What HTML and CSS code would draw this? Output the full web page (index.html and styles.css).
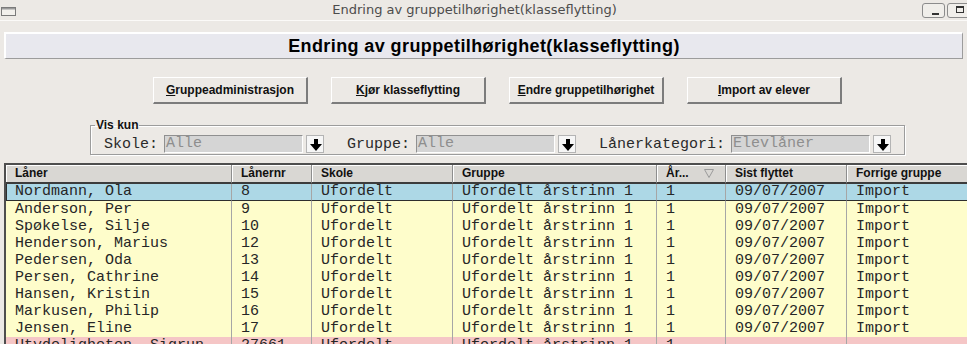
FILE: index.html
```html
<!DOCTYPE html>
<html>

<head>
    <meta charset="utf-8">
    <title>Endring av gruppetilhørighet(klasseflytting)</title>
    <link rel="stylesheet" href="styles.css">
</head>

<body>

    <div class="titlebar">
        <div class="winIcon">
            <svg width="15" height="9" viewBox="0 0 15 9">
                <rect x="0.5" y="0.5" width="14" height="8" fill="#f2f0ec" stroke="#7a7a7a" />
                <rect x="1" y="1" width="13" height="1.5" fill="#9a9a9a" />
            </svg>
        </div>
        <div class="winTitle">Endring av gruppetilhørighet(klasseflytting)</div>
        <div class="winButtons">
            <div class="winBtn">
                <svg width="21" height="13" viewBox="0 0 21 13">
                    <rect x="9" y="9" width="7" height="2" fill="#333" />
                </svg>
            </div>
            <div class="winBtn">
                <svg width="21" height="13" viewBox="0 0 21 13">
                    <rect x="8.5" y="2.5" width="7" height="6" fill="none" stroke="#333" />
                    <rect x="8.5" y="2.5" width="7" height="1.5" fill="#333" />
                </svg>
            </div>
        </div>
    </div>

    <div class="banner">Endring av gruppetilhørighet(klasseflytting)</div>

    <div class="toolbar">
        <button class="cmdBtn"><u>G</u>ruppeadministrasjon</button>
        <button class="cmdBtn"><u>K</u>jør klasseflytting</button>
        <button class="cmdBtn"><u>E</u>ndre gruppetilhørighet</button>
        <button class="cmdBtn"><u>I</u>mport av elever</button>
    </div>

    <fieldset class="filter">
        <legend>Vis kun</legend>
        <div class="filterRow">
            <div class="filterItem">
                <span class="filterLabel">Skole:</span>
                <span class="comboField">Alle</span>
                <span class="comboBtn">
                    <svg width="16" height="16" viewBox="0 0 16 16"><path d="M6 2H10V7H14L8 14L2 7H6Z" fill="#000" /></svg>
                </span>
            </div>
            <div class="filterItem">
                <span class="filterLabel">Gruppe:</span>
                <span class="comboField">Alle</span>
                <span class="comboBtn">
                    <svg width="16" height="16" viewBox="0 0 16 16"><path d="M6 2H10V7H14L8 14L2 7H6Z" fill="#000" /></svg>
                </span>
            </div>
            <div class="filterItem">
                <span class="filterLabel">Lånerkategori:</span>
                <span class="comboField">Elevlåner</span>
                <span class="comboBtn">
                    <svg width="16" height="16" viewBox="0 0 16 16"><path d="M6 2H10V7H14L8 14L2 7H6Z" fill="#000" /></svg>
                </span>
            </div>
        </div>
    </fieldset>

    <table class="grid">
        <colgroup>
            <col class="cLaaner">
            <col class="cNr">
            <col class="cSkole">
            <col class="cGruppe">
            <col class="cAar">
            <col class="cDato">
            <col class="cForrige">
        </colgroup>
        <thead>
            <tr>
                <th>Låner</th>
                <th>Lånernr</th>
                <th>Skole</th>
                <th>Gruppe</th>
                <th>År...<svg class="sortIcon" width="10" height="9" viewBox="0 0 10 9"><path d="M0.5 0.5H9.5L5 8.5Z" fill="none" stroke="#9a9a9a" /></svg></th>
                <th>Sist flyttet</th>
                <th>Forrige gruppe</th>
            </tr>
        </thead>
        <tbody>
            <tr class="selected">
                <td>Nordmann, Ola</td><td>8</td><td>Ufordelt</td><td>Ufordelt årstrinn 1</td><td>1</td><td>09/07/2007</td><td>Import</td>
            </tr>
            <tr>
                <td>Anderson, Per</td><td>9</td><td>Ufordelt</td><td>Ufordelt årstrinn 1</td><td>1</td><td>09/07/2007</td><td>Import</td>
            </tr>
            <tr>
                <td>Spøkelse, Silje</td><td>10</td><td>Ufordelt</td><td>Ufordelt årstrinn 1</td><td>1</td><td>09/07/2007</td><td>Import</td>
            </tr>
            <tr>
                <td>Henderson, Marius</td><td>12</td><td>Ufordelt</td><td>Ufordelt årstrinn 1</td><td>1</td><td>09/07/2007</td><td>Import</td>
            </tr>
            <tr>
                <td>Pedersen, Oda</td><td>13</td><td>Ufordelt</td><td>Ufordelt årstrinn 1</td><td>1</td><td>09/07/2007</td><td>Import</td>
            </tr>
            <tr>
                <td>Persen, Cathrine</td><td>14</td><td>Ufordelt</td><td>Ufordelt årstrinn 1</td><td>1</td><td>09/07/2007</td><td>Import</td>
            </tr>
            <tr>
                <td>Hansen, Kristin</td><td>15</td><td>Ufordelt</td><td>Ufordelt årstrinn 1</td><td>1</td><td>09/07/2007</td><td>Import</td>
            </tr>
            <tr>
                <td>Markusen, Philip</td><td>16</td><td>Ufordelt</td><td>Ufordelt årstrinn 1</td><td>1</td><td>09/07/2007</td><td>Import</td>
            </tr>
            <tr>
                <td>Jensen, Eline</td><td>17</td><td>Ufordelt</td><td>Ufordelt årstrinn 1</td><td>1</td><td>09/07/2007</td><td>Import</td>
            </tr>
            <tr class="flagged">
                <td>Utydeligheten, Sigrun</td><td>27661</td><td>Ufordelt</td><td>Ufordelt årstrinn 1</td><td>1</td><td></td><td></td>
            </tr>
        </tbody>
    </table>

</body>

</html>
```

FILE: styles.css
```css
body {
    margin: 0;
    padding: 0;
    width: 967px;
    height: 344px;
    overflow: hidden;
    background-color: #ece9e5;
    font-family: "Liberation Sans", Arial, sans-serif;
    color: #111;
}

/* vindustittel */
.titlebar {
    display: flex;
    align-items: flex-start;
    height: 20px;
    border-bottom: 1px solid #fbfaf8;
}

.winIcon {
    width: 16px;
    padding: 7px 0 0 1px;
    line-height: 0;
}

.winTitle {
    flex: 1;
    padding-left: 10px;
    text-align: center;
    font-family: "DejaVu Sans", sans-serif;
    font-size: 13px;
    line-height: 20px;
    color: #4c4c4c;
}

.winButtons {
    display: flex;
    gap: 2px;
    padding-top: 3px;
    margin-right: -3px;
}

.winBtn {
    width: 21px;
    height: 13px;
    border: 1px solid #8c8c8c;
    border-radius: 3px;
    background-color: #f0eeea;
    line-height: 0;
}

/* overskrift */
.banner {
    margin: 11px 4px 0 4px;
    height: 24px;
    border-style: solid;
    border-width: 2px 1px 1px 2px;
    border-color: #ffffff #9c9c9c #9c9c9c #ffffff;
    background-color: #e8e8ee;
    text-align: center;
    font-size: 18px;
    font-weight: bold;
    letter-spacing: 0.4px;
    line-height: 25px;
    color: #000;
}

/* knapper */
.toolbar {
    display: flex;
    gap: 23px;
    margin-top: 18px;
    padding-left: 153px;
}

.cmdBtn {
    width: 155px;
    height: 27px;
    padding: 0;
    background-color: #ece9e5;
    border-style: solid;
    border-width: 1px 2px 2px 1px;
    border-color: #ffffff #7c7c7c #7c7c7c #ffffff;
    font-family: "Liberation Sans", Arial, sans-serif;
    font-size: 12px;
    font-weight: bold;
    color: #111;
}

/* filter */
.filter {
    margin: 15px 0 0 90px;
    width: 815px;
    box-sizing: border-box;
    padding: 4px 0 1px 13px;
    border: 1px solid #9c9c9c;
    box-shadow: 1px 1px 0 #ffffff, inset 1px 1px 0 #ffffff;
    min-inline-size: 0;
}

.filter legend {
    margin-left: -9px;
    padding: 0 1px;
    font-size: 12px;
    font-weight: bold;
    line-height: 12px;
    color: #111;
}

.filterRow {
    display: flex;
    gap: 23px;
}

.filterItem {
    display: flex;
    align-items: center;
}

.filterLabel {
    margin-right: 6px;
    font-family: "Liberation Mono", "Courier New", monospace;
    font-size: 15px;
    color: #2a2a2a;
}

.comboField {
    width: 139px;
    height: 18px;
    box-sizing: border-box;
    padding-left: 1px;
    border-style: solid;
    border-width: 1px;
    border-color: #909090 #ffffff #ffffff #909090;
    background-color: #d5d5d5;
    font-family: "Liberation Mono", "Courier New", monospace;
    font-size: 15px;
    line-height: 16px;
    color: #8e8e8e;
}

.comboBtn {
    width: 18px;
    height: 18px;
    box-sizing: border-box;
    margin-left: 3px;
    padding: 1px 0 0 1px;
    border: 1px solid #b4b4b4;
    background-color: #f6f6f6;
    line-height: 0;
}

/* tabell */
.grid {
    margin: 8px 0 0 4px;
    width: 990px;
    table-layout: fixed;
    border-collapse: separate;
    border-spacing: 0;
    border-left: 2px solid #4e4e4e;
    border-top: 2px solid #4e4e4e;
}

.cLaaner {
    width: 226px;
}

.cNr {
    width: 80px;
}

.cSkole {
    width: 141px;
}

.cGruppe {
    width: 204px;
}

.cAar {
    width: 69px;
}

.cDato {
    width: 121px;
}

.grid th {
    height: 17px;
    padding: 0 0 0 9px;
    text-align: left;
    font-size: 12px;
    font-weight: bold;
    line-height: 17px;
    white-space: nowrap;
    background-color: #d9d7d3;
    border-right: 1px solid #8e8e8e;
    border-bottom: 2px solid #3c3c3c;
    box-shadow: inset 1px 1px 0 #ffffff;
}

.sortIcon {
    margin-left: 15px;
    vertical-align: -1px;
}

.grid tbody tr {
    height: 17px;
    background-color: #fefdcb;
}

.grid td {
    padding: 0 0 0 9px;
    font-family: "Liberation Mono", "Courier New", monospace;
    font-size: 15px;
    line-height: 17px;
    white-space: nowrap;
    overflow: hidden;
    color: #262626;
    border-right: 1px solid #a6a6a6;
}

.grid tr.selected {
    background-color: #add8e6;
}

.grid tr.selected td {
    line-height: 16px;
    border-bottom: 1px solid #2e2e2e;
}

.grid tr.selected td:first-child {
    border-left: 1px solid #2e2e2e;
    padding-left: 8px;
}

.grid tr.flagged {
    background-color: #f5c6c6;
}
```
